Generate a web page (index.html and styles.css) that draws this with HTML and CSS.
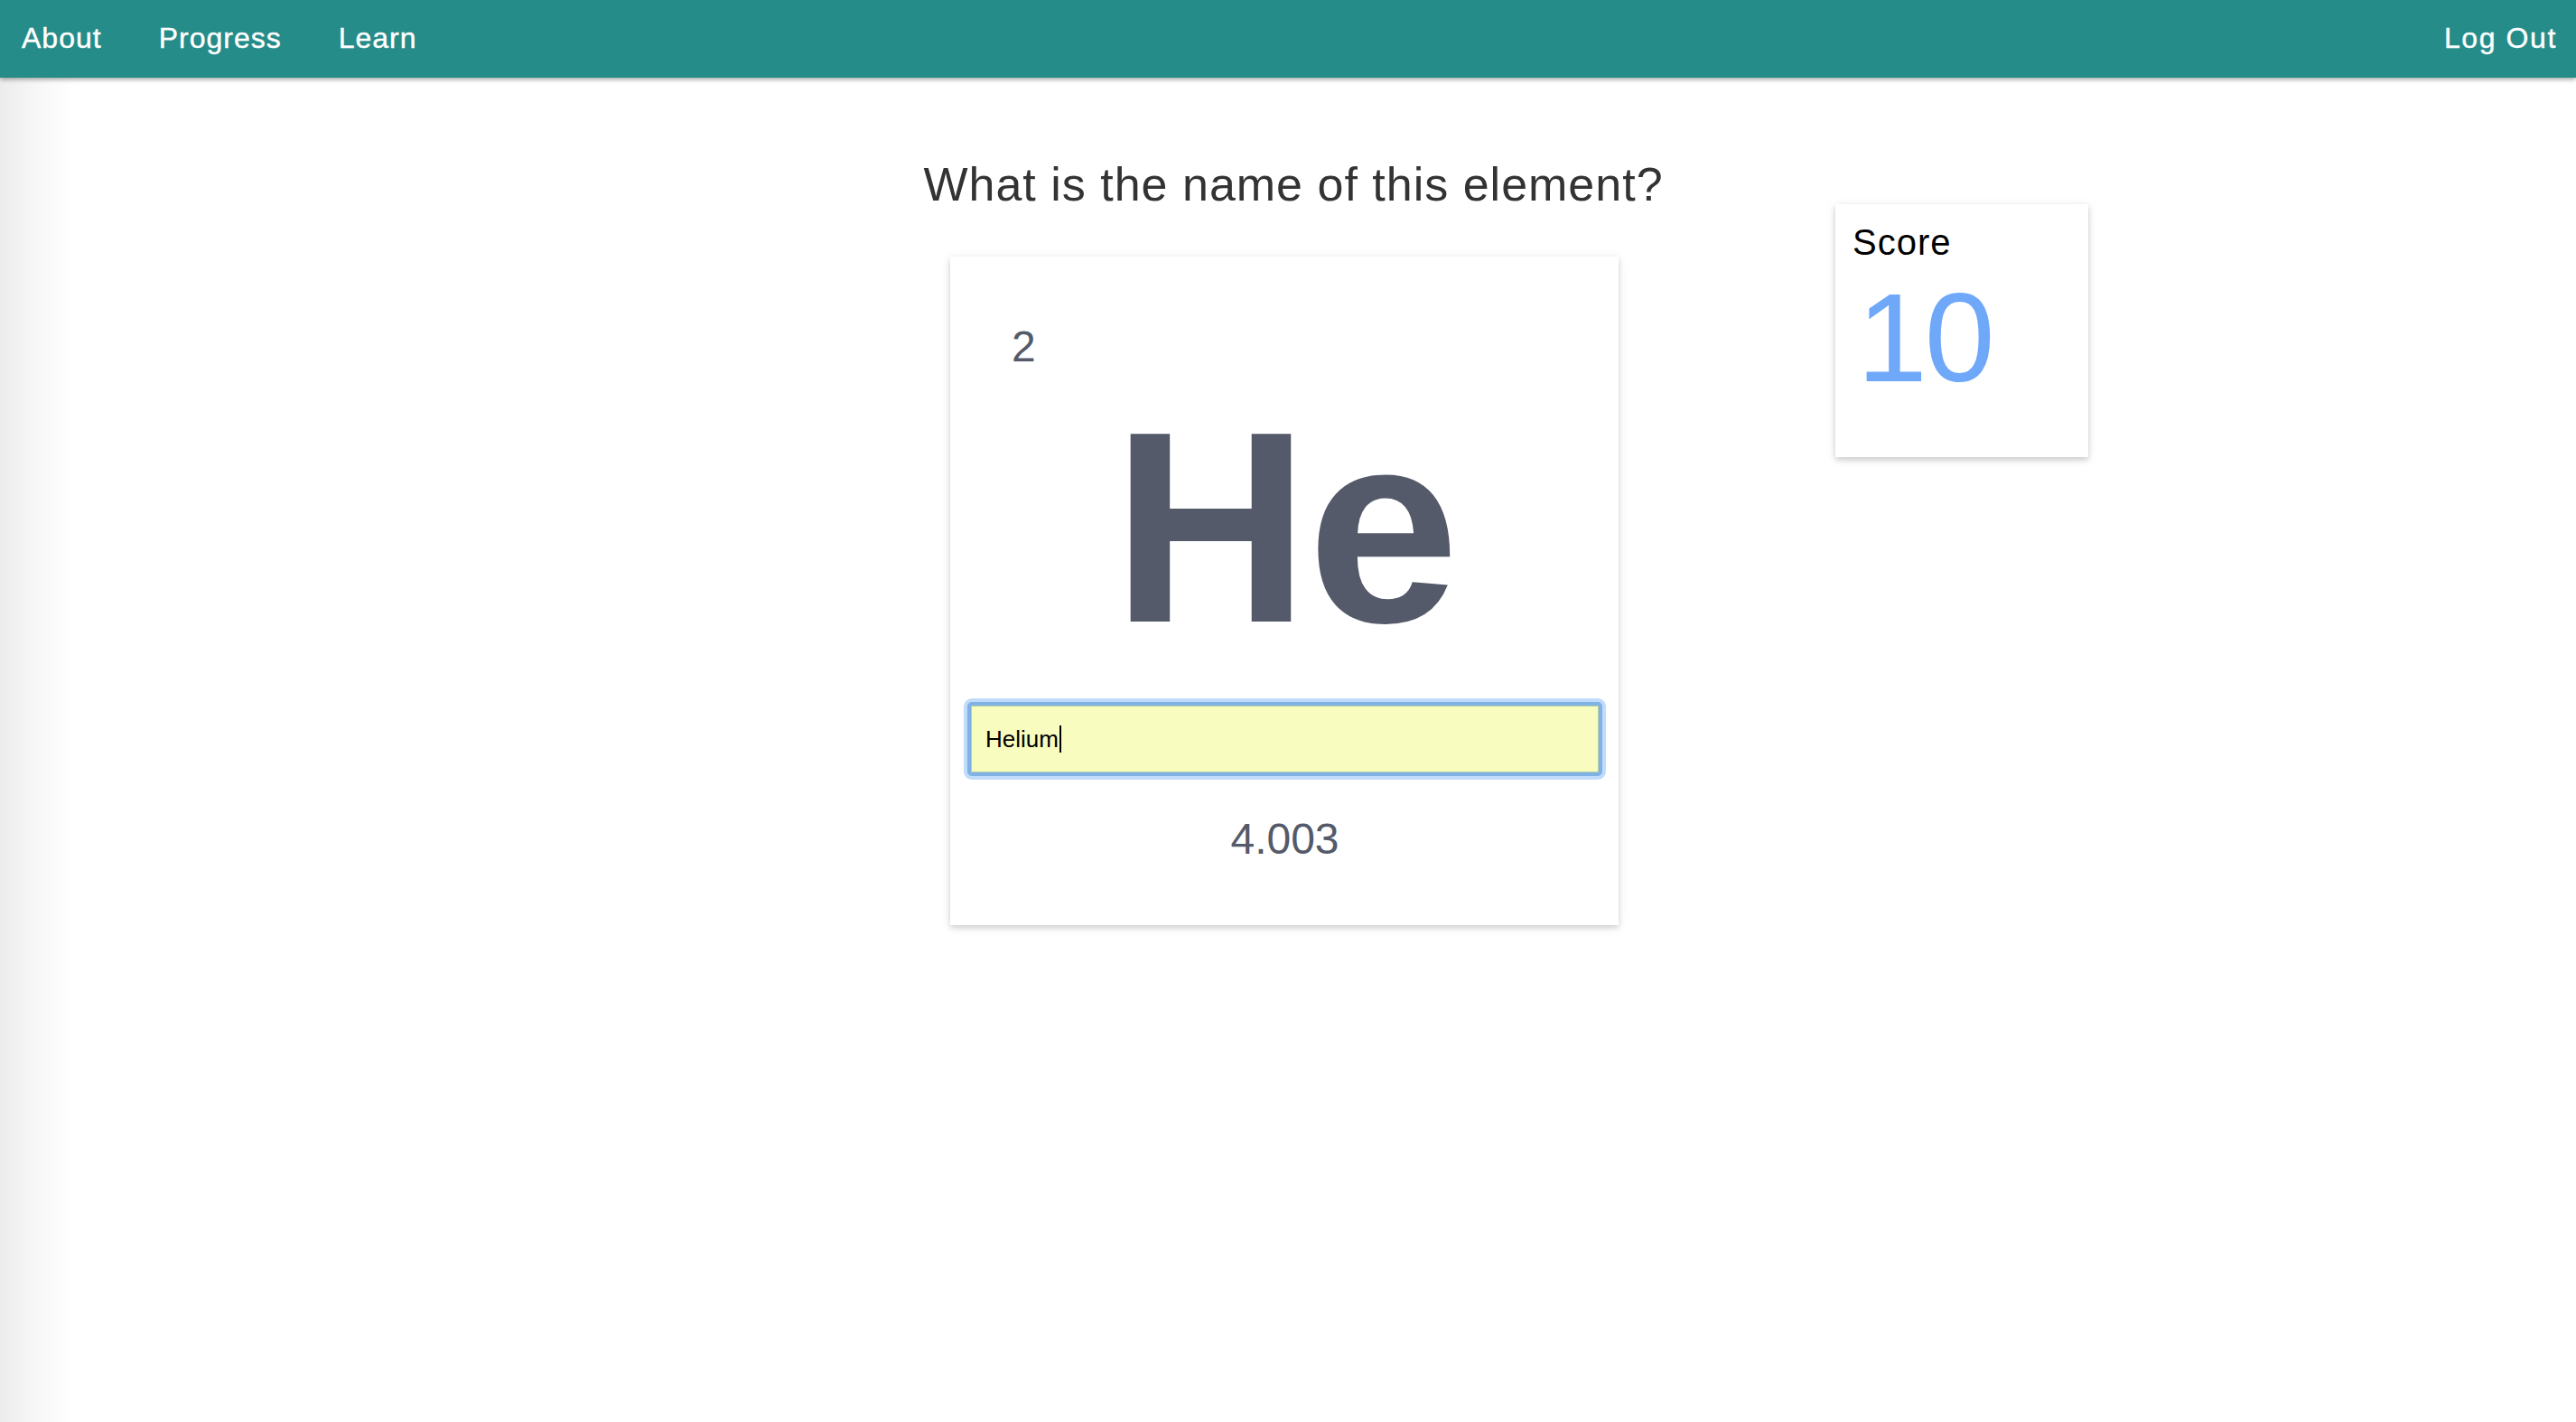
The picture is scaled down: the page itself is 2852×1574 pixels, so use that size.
FILE: index.html
```html
<!DOCTYPE html>
<html lang="en">
<head>
<meta charset="utf-8">
<title>Element Quiz</title>
<link rel="stylesheet" href="styles.css">
</head>
<body>
<header class="topbar">
  <nav class="nav-left">
    <a class="nav-link" href="#">About</a>
    <a class="nav-link" href="#">Progress</a>
    <a class="nav-link" href="#">Learn</a>
  </nav>
  <a class="nav-link logout" href="#">Log Out</a>
</header>
<main class="page">
  <div class="quiz">
    <section class="center">
      <h1 class="question">What is the name of this element?</h1>
      <div class="card">
        <div class="atomic-number">2</div>
        <div class="symbol">He</div>
        <div class="answer"><span class="answer-text">Helium</span><span class="caret"></span></div>
        <div class="mass">4.003</div>
      </div>
    </section>
    <aside class="score">
      <div class="score-label">Score</div>
      <div class="score-value">10</div>
    </aside>
  </div>
</main>
</body>
</html>
```

FILE: styles.css
```css
* { box-sizing: border-box; }

html, body {
  margin: 0;
  padding: 0;
  background: #ffffff;
  font-family: "Liberation Sans", Arial, Helvetica, sans-serif;
}

.topbar {
  height: 86px;
  background: #258c89;
  display: flex;
  align-items: center;
  justify-content: space-between;
  padding: 0 21px 0 24px;
  box-shadow: 0 2px 5px rgba(0, 0, 0, 0.35);
  position: relative;
  z-index: 2;
}

.nav-left {
  display: flex;
  gap: 63px;
}

.nav-link {
  color: #ffffff;
  text-decoration: none;
  font-size: 32px;
  letter-spacing: 1px;
  line-height: 1;
  margin-top: -3px;
  -webkit-text-stroke: 0.4px #ffffff;
}

.logout {
  letter-spacing: 1.6px;
}

.page {
  min-height: calc(100vh - 86px);
  background: linear-gradient(to right, #ececec 0px, #f7f7f7 40px, #ffffff 82px);
  padding-top: 88px;
}

.quiz {
  display: grid;
  grid-template-columns: 1fr 820px 1fr;
  margin-left: 12px;
  align-items: start;
}

.center {
  grid-column: 2;
  display: flex;
  flex-direction: column;
}

.question {
  margin: 0;
  font-size: 52px;
  font-weight: normal;
  letter-spacing: 1px;
  color: #333333;
  text-align: center;
  line-height: 60px;
  white-space: nowrap;
}

.card {
  margin: 50px 0 0 30px;
  width: 740px;
  height: 740px;
  background: #ffffff;
  box-shadow: 0 3px 6px rgba(0, 0, 0, 0.14), 0 2px 12px rgba(0, 0, 0, 0.08);
  padding: 72px 18px 0 19px;
  display: flex;
  flex-direction: column;
  color: #545a69;
}

.atomic-number {
  font-size: 48px;
  line-height: 55px;
  padding-left: 49px;
}

.symbol {
  margin-top: 22px;
  font-size: 302px;
  font-weight: bold;
  line-height: 302px;
  text-align: center;
  letter-spacing: -2px;
}

.answer {
  margin-top: 42px;
  height: 82px;
  background: #f8fcbf;
  border: 4px solid #80b2e6;
  box-shadow: 0 0 0 4px rgba(150, 196, 246, 0.6), inset 0 0 0 1px #b4cfa8;
  border-radius: 5px;
  display: flex;
  align-items: center;
  padding-left: 16px;
  color: #000000;
  font-size: 26px;
}

.caret {
  display: inline-block;
  width: 2px;
  height: 30px;
  background: #000000;
  margin-left: 1px;
}

.mass {
  margin-top: 42px;
  font-size: 48px;
  line-height: 55px;
  text-align: center;
}

.score {
  grid-column: 3;
  margin: 52px 0 0 190px;
  width: 280px;
  height: 280px;
  background: #ffffff;
  box-shadow: 0 3px 6px rgba(0, 0, 0, 0.16), 0 2px 12px rgba(0, 0, 0, 0.08);
  padding: 19px 0 0 19px;
}

.score-label {
  font-size: 40px;
  line-height: 46px;
  letter-spacing: 1px;
  color: #000000;
}

.score-value {
  margin-top: 13px;
  padding-left: 5px;
  font-size: 140px;
  line-height: 1;
  letter-spacing: -3px;
  color: #6fa8f8;
}
```
